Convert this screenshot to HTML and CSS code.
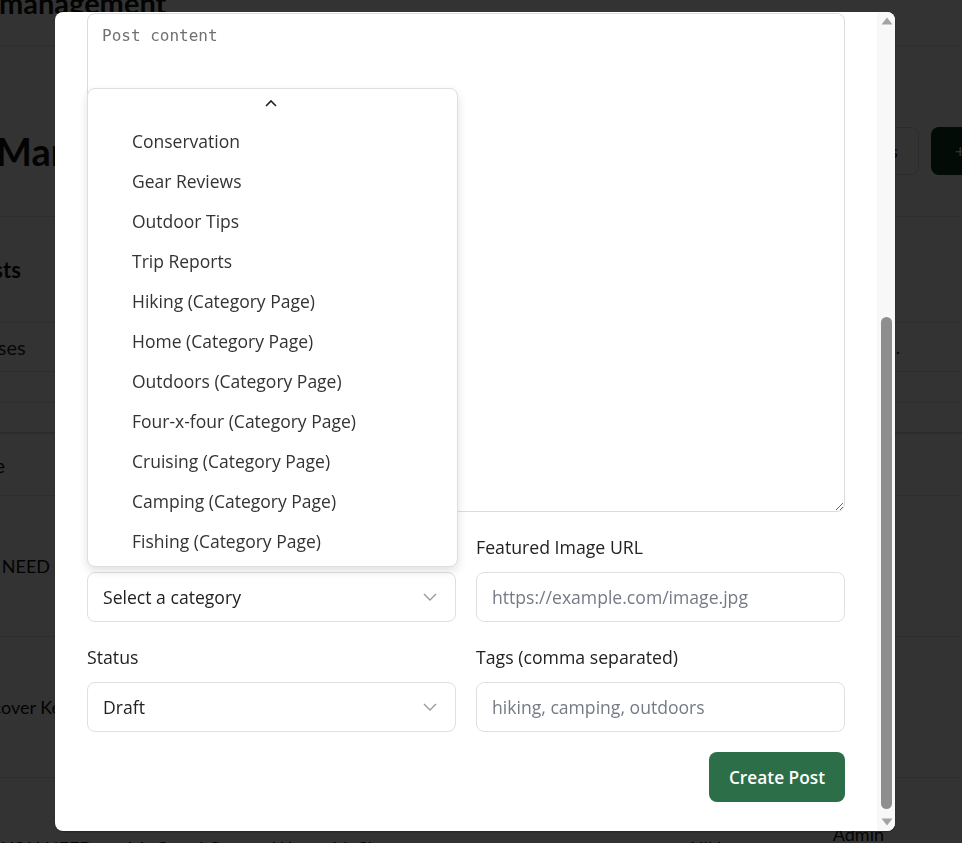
FILE: index.html
```html
<!DOCTYPE html>
<html lang="en">
<head>
<meta charset="utf-8">
<title>Post management</title>
<link rel="stylesheet" href="styles.css">
</head>
<body>
<div class="page">
  <header class="topbar"><h1 class="brand">management</h1></header>
  <section class="titlebar">
    <h2 class="page-title">Management</h2>
    <div class="actions">
      <button class="btn-outline">Categories</button>
      <button class="btn-dark">+ New Post</button>
    </div>
  </section>
  <section class="card-head"><h3 class="card-title">All Posts</h3></section>
  <div class="filter-row"><span class="filter-text">All Statuses</span><span class="filter-dot">.</span></div>
  <div class="thin-row"></div>
  <div class="thin-row thick"></div>
  <div class="t-head"><span class="th-text">Title</span></div>
  <div class="t-row"><span class="cell-a">YOU NEED to visit</span></div>
  <div class="t-row"><span class="cell-b">Discover Kentucky</span></div>
  <div class="t-row last">
    <span class="cell-c">YOU NEED to visit Grand Canyon West with Shoo</span>
    <span class="cell-cat">Hiking</span>
    <span class="cell-author">Admin</span>
  </div>
</div>

<div class="overlay">
  <div class="modal">
    <div class="modal-body">
      <textarea class="content-area" placeholder="Post content"></textarea>
      <div class="form-grid">
        <div class="field">
          <label class="label">Category</label>
          <div class="select"><span>Select a category</span>
            <svg class="chev" width="14" height="8" viewBox="0 0 14 8"><path d="M1 1l6 6 6-6" fill="none" stroke="#9a9a9a" stroke-width="1.4"/></svg>
          </div>
          <div class="dropdown">
            <div class="dd-arrow"><svg width="12" height="8" viewBox="0 0 12 8"><path d="M1 7l5-5 5 5" fill="none" stroke="#222" stroke-width="1.6"/></svg></div>
            <ul class="dd-list">
              <li>Conservation</li>
              <li>Gear Reviews</li>
              <li>Outdoor Tips</li>
              <li>Trip Reports</li>
              <li>Hiking (Category Page)</li>
              <li>Home (Category Page)</li>
              <li>Outdoors (Category Page)</li>
              <li>Four-x-four (Category Page)</li>
              <li>Cruising (Category Page)</li>
              <li>Camping (Category Page)</li>
              <li>Fishing (Category Page)</li>
            </ul>
          </div>
        </div>
        <div class="field">
          <label class="label">Featured Image URL</label>
          <input class="input" type="text" placeholder="https://example.com/image.jpg">
        </div>
        <div class="field">
          <label class="label">Status</label>
          <div class="select"><span>Draft</span>
            <svg class="chev" width="14" height="8" viewBox="0 0 14 8"><path d="M1 1l6 6 6-6" fill="none" stroke="#9a9a9a" stroke-width="1.4"/></svg>
          </div>
        </div>
        <div class="field">
          <label class="label">Tags (comma separated)</label>
          <input class="input" type="text" placeholder="hiking, camping, outdoors">
        </div>
      </div>
      <div class="footer"><button class="btn-create">Create Post</button></div>
    </div>
    <div class="scrollbar">
      <div class="sb-btn"><svg width="12" height="8" viewBox="0 0 12 8"><path d="M6 0.5L11.5 7.5H0.5Z" fill="#a3a3a3"/></svg></div>
      <div class="sb-track"><div class="sb-thumb"></div></div>
      <div class="sb-btn"><svg width="12" height="8" viewBox="0 0 12 8"><path d="M0.5 0.5H11.5L6 7.5Z" fill="#a3a3a3"/></svg></div>
    </div>
  </div>
</div>
</body>
</html>
```

FILE: styles.css
```css
* { box-sizing: border-box; }
html, body { margin: 0; padding: 0; }
body {
  background: #fff;
  font-family: Lato, "Liberation Sans", sans-serif;
  color: #111;
  width: 962px;
  height: 843px;
  overflow: hidden;
}

/* background page */
.page { width: 962px; }
.topbar { height: 46px; border-bottom: 1px solid #e5e7eb; overflow: hidden; }
.brand { margin: -14px 0 0 -1px; font: 700 29px/1.2 Lato, sans-serif; letter-spacing: 0; }
.titlebar {
  height: 171px;
  border-bottom: 1px solid #e5e7eb;
  display: flex;
  justify-content: space-between;
  align-items: flex-start;
  padding-top: 81px;
}
.page-title { margin: 0 0 0 -4px; font: 700 38px/48px Lato, sans-serif; }
.actions { display: flex; gap: 12px; margin-right: -108px; }
.btn-outline {
  height: 48px; padding: 0 20px; border: 1px solid #d4d4d4; border-radius: 8px;
  background: #fff; font: 400 18px Lato, sans-serif; color: #111;
}
.btn-dark {
  height: 48px; padding: 0 24px; border: 0; border-radius: 8px;
  background: #123a1e; color: #fff; font: 400 18px Lato, sans-serif;
}
.card-head { height: 106px; border-bottom: 1px solid #e5e7eb; display: flex; align-items: center; }
.card-title { margin: 0 0 0 -64px; font: 700 22px Lato, sans-serif; }
.filter-row { height: 49px; border-bottom: 1px solid #e5e7eb; display: flex; align-items: center; justify-content: space-between; }
.filter-text { margin-left: -76px; font: 400 20px Lato, sans-serif; color: #222; }
.filter-dot { margin-right: 62px; font-size: 18px; }
.thin-row { height: 31px; border-bottom: 1px solid #e5e7eb; }
.thin-row.thick { border-bottom: 2px solid #d9d9d9; }
.t-head { height: 62px; border-bottom: 1px solid #e5e7eb; display: flex; align-items: center; }
.th-text { margin-left: -34px; font: 400 20px Lato, sans-serif; }
.t-row { height: 141px; border-bottom: 1px solid #e5e7eb; display: flex; align-items: center; }
.cell-a { margin-left: -41px; font: 400 18px Lato, sans-serif; }
.cell-b { margin-left: -33px; font: 400 18px Lato, sans-serif; }
.t-row.last { align-items: flex-start; padding-top: 45px; }
.cell-c { margin-left: 2px; margin-top: 14px; font: 400 18px Lato, sans-serif; width: 640px; white-space: nowrap; }
.cell-cat { margin-left: 48px; margin-top: 14px; font: 400 18px Lato, sans-serif; }
.cell-author { margin-left: 92px; margin-top: 0; font: 400 18px Lato, sans-serif; }

/* overlay + modal */
.overlay {
  position: fixed; inset: 0;
  background: rgba(0, 0, 0, 0.8);
  display: flex; align-items: flex-start;
  padding: 12px 0 0 55px;
}
.modal {
  width: 840px; height: 819px;
  background: #fff;
  border-radius: 8px;
  display: flex;
  overflow: hidden;
  box-shadow: 0 1px 2px rgba(0,0,0,0.3);
}
.modal-body {
  flex: 1;
  padding: 1px 32px 0 32px;
  font-family: "Open Sans", "Noto Sans", sans-serif;
}
.content-area {
  display: block;
  width: 100%;
  height: 499px;
  border: 1px solid #dcdcdc;
  border-radius: 8px;
  padding: 10px 14px;
  font: 400 16px/24px "DejaVu Sans Mono", monospace;
  color: #333;
  resize: vertical;
  outline: none;
}
.content-area::placeholder { color: #707070; }
.form-grid {
  margin-top: 23px;
  display: grid;
  grid-template-columns: 1fr 1fr;
  column-gap: 20px;
  row-gap: 23px;
}
.field { display: flex; flex-direction: column; gap: 12px; position: relative; }
.label { font: 400 17.7px/25px "Open Sans", sans-serif; color: #222; }
.select, .input {
  height: 50px;
  border: 1px solid #e0e0e0;
  border-radius: 8px;
  font: 400 17.6px "Open Sans", sans-serif;
  color: #222;
  padding: 0 15px;
}
.select { display: flex; align-items: center; justify-content: space-between; padding-right: 18px; }
.input { outline: none; width: 100%; }
.input::placeholder { color: #757b85; }
.footer { display: flex; justify-content: flex-end; margin-top: 20px; }
.btn-create {
  height: 50px; padding: 0 20px;
  background: #2c6e48; color: #fff;
  border: 0; border-radius: 8px;
  font: 600 17.3px "Open Sans", sans-serif;
}

/* open dropdown of category select */
.dropdown {
  position: absolute;
  left: 0; bottom: 55px;
  width: 371px; height: 479px;
  background: #fff;
  border: 1px solid #dedede;
  border-radius: 8px;
  box-shadow: 0 4px 10px rgba(0,0,0,0.12);
}
.dd-arrow { height: 32px; display: flex; justify-content: center; align-items: center; padding: 0 4px 4px 0; }
.dd-list { list-style: none; margin: 0; padding: 0; }
.dd-list li {
  height: 40px;
  padding-left: 44px;
  font: 400 17.5px/40px "Open Sans", sans-serif;
  color: #333;
}

/* scrollbar */
.scrollbar {
  width: 18px;
  background: #f8f8f8;
  display: flex; flex-direction: column;
}
.sb-btn { height: 18px; display: flex; align-items: center; justify-content: center; padding-left: 2px; }
.sb-track { flex: 1; display: flex; flex-direction: column; justify-content: flex-end; padding: 0 3px 4px 4px; }
.sb-thumb { height: 492px; background: #8e8e8e; border-radius: 6px; }
```
